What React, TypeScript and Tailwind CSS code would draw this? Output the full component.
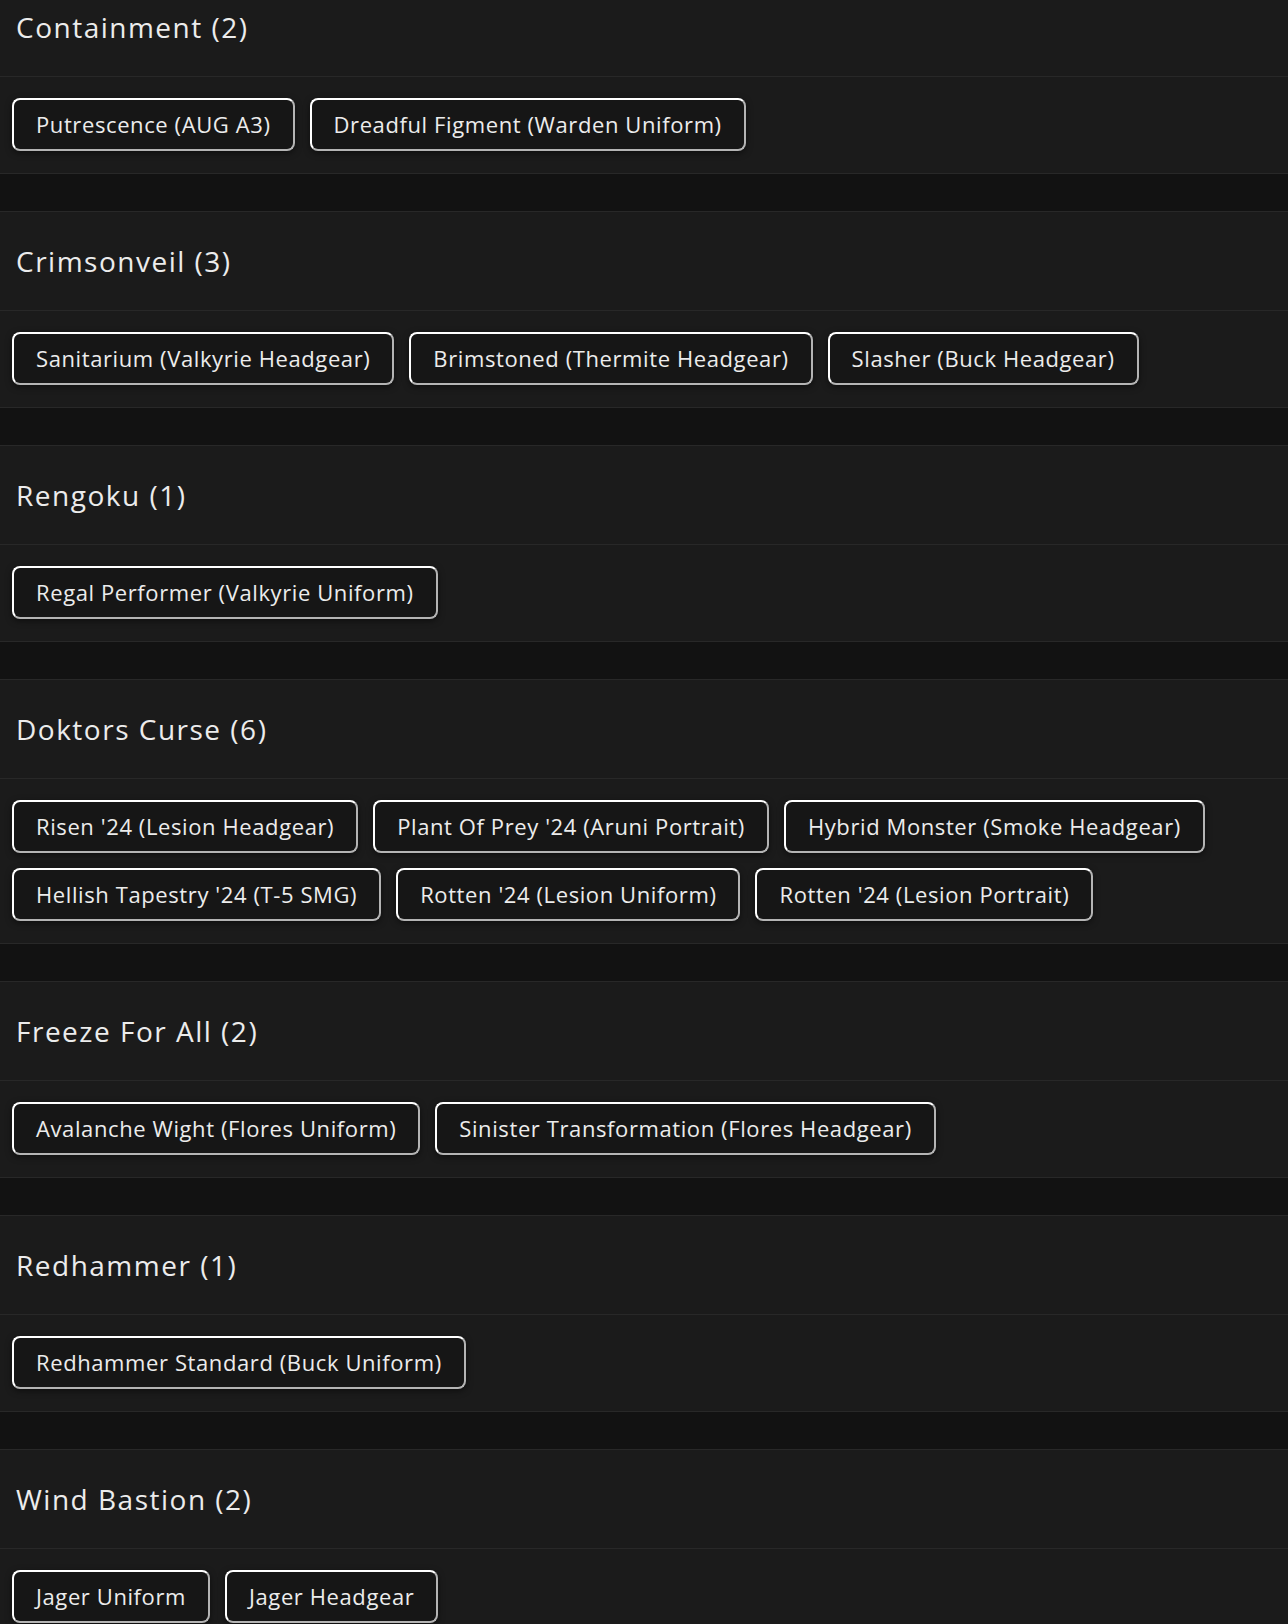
const events = [
  { name: 'Containment', items: ['Putrescence (AUG A3)', 'Dreadful Figment (Warden Uniform)'] },
  {
    name: 'Crimsonveil',
    items: ['Sanitarium (Valkyrie Headgear)', 'Brimstoned (Thermite Headgear)', 'Slasher (Buck Headgear)'],
  },
  { name: 'Rengoku', items: ['Regal Performer (Valkyrie Uniform)'] },
  {
    name: 'Doktors Curse',
    items: [
      "Risen '24 (Lesion Headgear)",
      "Plant Of Prey '24 (Aruni Portrait)",
      'Hybrid Monster (Smoke Headgear)',
      "Hellish Tapestry '24 (T-5 SMG)",
      "Rotten '24 (Lesion Uniform)",
      "Rotten '24 (Lesion Portrait)",
    ],
  },
  {
    name: 'Freeze For All',
    items: ['Avalanche Wight (Flores Uniform)', 'Sinister Transformation (Flores Headgear)'],
  },
  { name: 'Redhammer', items: ['Redhammer Standard (Buck Uniform)'] },
  { name: 'Wind Bastion', items: ['Jager Uniform', 'Jager Headgear'] },
];

const Chip = ({ label }: { label: string }) => (
  <div className="flex h-[53px] items-center rounded-lg border-2 border-white border-r-[#b4b4b4] border-b-[#b4b4b4] bg-[#161616] px-[22px] text-[22px] tracking-[0.6px] text-[#ececec] shadow-[0_2px_6px_rgba(0,0,0,0.5)]">
    {label}
  </div>
);

export default function App() {
  return (
    <div className="h-[1624px] overflow-hidden bg-[#121212] font-['Open_Sans',sans-serif]">
      <div className="-mt-[23px] flex flex-col gap-[37px]">
        {events.map((ev) => (
          <section key={ev.name} className="border-y border-[#282828] bg-[#1b1b1b]">
            <div className="flex h-[99px] items-center border-b border-[#282828] px-4">
              <h2 className="text-[28px] font-medium tracking-[1.5px] text-[#ececec]">
                {ev.name} ({ev.items.length})
              </h2>
            </div>
            <div className="flex flex-wrap gap-[15px] px-3 pt-[21px] pb-[22px]">
              {ev.items.map((it) => (
                <Chip key={it} label={it} />
              ))}
            </div>
          </section>
        ))}
      </div>
    </div>
  );
}
